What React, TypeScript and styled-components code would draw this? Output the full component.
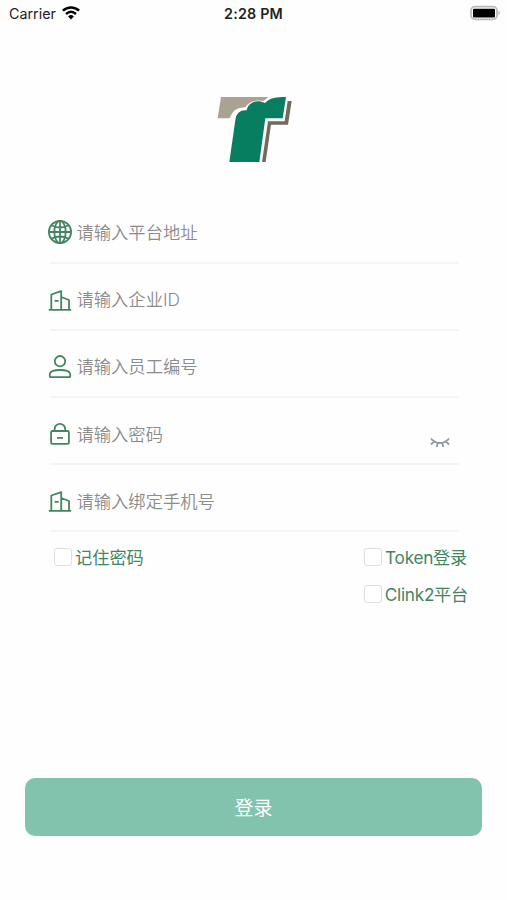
import React, { useState } from 'react';
import styled, { createGlobalStyle } from 'styled-components';

const GREEN = '#438562';

const GlobalStyle = createGlobalStyle`
  * { box-sizing: border-box; }
  body { margin: 0; background: #fefefe; }
`;

const Screen = styled.main`
  width: 507px;
  height: 900px;
  display: flex;
  flex-direction: column;
  overflow: hidden;
  background: #fefefe;
  font-family: Inter, 'Noto Sans CJK SC', sans-serif;
`;

const StatusBar = styled.header`
  height: 28px;
  flex: none;
  display: grid;
  grid-template-columns: 1fr auto 1fr;
  align-items: center;
  padding: 0 6px 0 9px;
  color: #222;
  font-size: 14.3px;
`;

const Carrier = styled.div`
  display: flex;
  align-items: center;
  gap: 6px;
  margin-top: -2px;
`;

const Time = styled.div`
  font-weight: 600;
  font-size: 14.3px;
  letter-spacing: 0.2px;
  margin: -2px 3px 0 0;
`;

const Battery = styled.svg`
  justify-self: end;
  margin-top: -2px;
`;

const LogoArea = styled.div`
  height: 168.4px;
  flex: none;
  display: flex;
  justify-content: center;
  padding-top: 57px;
`;

const Logo = styled.svg`
  margin-left: 3px;
`;

const Form = styled.form`
  flex: 1;
  display: flex;
  flex-direction: column;
`;

const Field = styled.label`
  height: 67.2px;
  flex: none;
  display: flex;
  align-items: center;
  margin: 0 48px 0 50px;
  padding-top: 8px;
  border-bottom: 2px solid #f5f5f5;
`;

const FieldIcon = styled.svg`
  flex: none;
  width: 24px;
  height: 24px;
  margin: -1px 4.5px 0 -2px;
  fill: none;
  stroke: ${GREEN};
  stroke-width: 1.8;
  stroke-linejoin: round;
`;

const Input = styled.input`
  flex: 1;
  min-width: 0;
  height: 30px;
  padding: 0;
  border: 0;
  outline: 0;
  background: transparent;
  color: #444;
  font: 350 17.3px/30px Inter, 'Noto Sans CJK SC', sans-serif;
  &::placeholder { color: #8b8b8b; opacity: 1; }
`;

const EyeButton = styled.button`
  display: flex;
  margin: 17px 9px 0 0;
  padding: 0;
  border: 0;
  background: none;
`;

const Options = styled.div`
  display: flex;
  justify-content: space-between;
  padding: 7px 39px 0 54px;
`;

const OptionColumn = styled.div`
  display: flex;
  flex-direction: column;
  align-items: flex-end;
  gap: 1px;
`;

const Option = styled.label<{ $inset?: number }>`
  display: flex;
  align-items: center;
  gap: 3px;
  height: 36px;
  margin-right: ${({ $inset = 0 }) => $inset}px;
  color: ${GREEN};
  font-size: 17.2px;
  white-space: nowrap;
`;

const OptionText = styled.span<{ $tracking?: number }>`
  margin-top: -2px;
  letter-spacing: ${({ $tracking = 0 }) => $tracking}px;
`;

const Checkbox = styled.input`
  appearance: none;
  flex: none;
  width: 18px;
  height: 18px;
  margin: 0;
  border: 1.5px solid #dedede;
  border-radius: 3px;
  background: #fff;
  &:checked { background: ${GREEN}; }
`;

const Submit = styled.button`
  height: 58px;
  margin: auto 25px 64px;
  border: 0;
  border-radius: 10px;
  background: #82c3ae;
  color: #fff;
  font: 400 19px/28px 'Noto Sans CJK SC', sans-serif;
`;

const Globe = () => (
  <FieldIcon viewBox="0 0 24 24">
    <circle cx="12" cy="12" r="11.1" />
    <ellipse cx="12" cy="12" rx="5.7" ry="11.1" />
    <path d="M12 1v22M1 12h22M3.4 5.2Q12 9.8 20.6 5.2M3.4 18.8Q12 14.2 20.6 18.8" />
  </FieldIcon>
);

const Building = () => (
  <FieldIcon viewBox="0 0 24 24">
    <path d="M.8 21.8h22.4M3.3 21.8V6.5L13.2 3.2v18.6M13.2 9l7.8 3v9.8M6.6 12.8h4" />
  </FieldIcon>
);

const Person = () => (
  <FieldIcon viewBox="0 0 24 24">
    <circle cx="12" cy="6.2" r="5.2" />
    <path d="M2.7 22.2H21.3Q22.2 22.2 22.2 21.2V18.8Q21.5 15 12 15T1.8 18.8V21.2Q1.8 22.2 2.7 22.2Z" />
  </FieldIcon>
);

const Lock = () => (
  <FieldIcon viewBox="0 0 24 24">
    <rect x="3.1" y="9" width="17.8" height="12.8" rx="1.3" />
    <path d="M6.6 9V7.2a5.2 5.2 0 0 1 10.6 0V9M9 15.8h6" />
  </FieldIcon>
);

const ClosedEye = () => (
  <svg width="20" height="12" viewBox="0 0 20 12" fill="none" stroke="#8f999d" strokeWidth="1.8">
    <path d="M1 1.5Q4.5 6 10 6T19 1.5M4.2 4.4L1 7.5M7.8 6L6.6 10M12.2 6L13.4 10M15.8 4.4L19 7.5" />
  </svg>
);

const fields = [
  { icon: Globe, text: '请输入平台地址', type: 'text' },
  { icon: Building, text: '请输入企业ID', type: 'text' },
  { icon: Person, text: '请输入员工编号', type: 'text' },
  { icon: Lock, text: '请输入密码', type: 'password' },
  { icon: Building, text: '请输入绑定手机号', type: 'tel' },
];

export default function App() {
  const [visible, setVisible] = useState(false);
  return (
    <Screen>
      <GlobalStyle />
      <StatusBar>
        <Carrier>
          <span>Carrier</span>
          <svg width="18" height="14" viewBox="0 0 18 14" fill="none" stroke="#000" strokeWidth="2.5">
            <path d="M.9 4.7C5.5.3 12.5.3 17.1 4.7M4 8Q9 3.5 14 8" />
            <path d="M6.1 10.4Q9 7.8 11.9 10.4L9 13.4Z" fill="#000" stroke="none" />
          </svg>
        </Carrier>
        <Time>2:28 PM</Time>
        <Battery width="31" height="16" viewBox="0 0 31 16">
          <rect x="1" y="1.7" width="26" height="12.6" rx="4" fill="#fff" stroke="#b9b9b9" strokeWidth="1.7" />
          <rect x="3" y="3.8" width="22" height="8.6" rx="1" fill="#000" />
          <path d="M28.5 5.8Q31 8 28.5 10.3Z" fill="#aaa" />
        </Battery>
      </StatusBar>
      <LogoArea>
        <Logo width="100" height="90" viewBox="0 0 300 270">
          <path d="M48 36H190L176 48Q138 41 121 67Q84 66 74 100H38Z" fill="#aaa292" />
          <path d="M73 231L91 105Q95 74 125 76C130 49 158 43 180 54Q196 33 243 36L233 100H181L163 231Z" fill="#087e60" />
          <path d="M248 48H260L249 119H198L182 231H171L189 109H239Z" fill="#736a5e" />
        </Logo>
      </LogoArea>
      <Form onSubmit={(event) => event.preventDefault()}>
        {fields.map(({ icon: Icon, text, type }) => (
          <Field key={text}>
            <Icon />
            <Input type={type === 'password' && visible ? 'text' : type} placeholder={text} />
            {type === 'password' && (
              <EyeButton type="button" aria-label="显示密码" onClick={() => setVisible(!visible)}>
                <ClosedEye />
              </EyeButton>
            )}
          </Field>
        ))}
        <Options>
          <Option><Checkbox type="checkbox" /><OptionText>记住密码</OptionText></Option>
          <OptionColumn>
            <Option $inset={1}>
              <Checkbox type="checkbox" /><OptionText $tracking={-0.25}>Token登录</OptionText>
            </Option>
            <Option>
              <Checkbox type="checkbox" /><OptionText $tracking={-0.25}>Clink2平台</OptionText>
            </Option>
          </OptionColumn>
        </Options>
        <Submit type="submit">登录</Submit>
      </Form>
    </Screen>
  );
}
